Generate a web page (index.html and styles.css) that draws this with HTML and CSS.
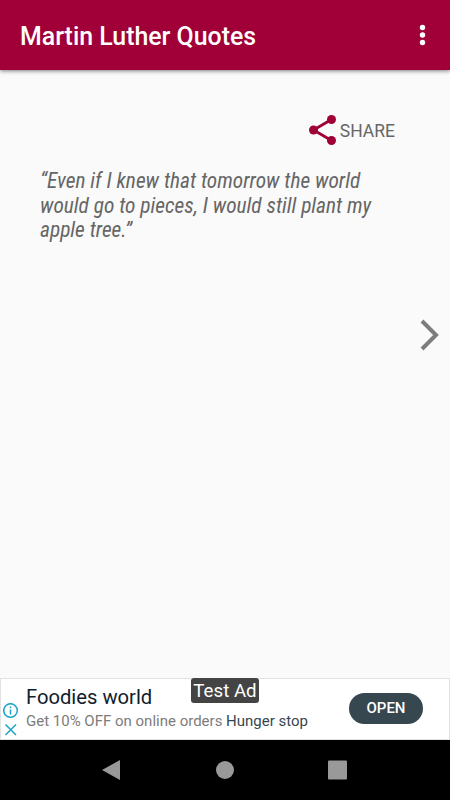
FILE: index.html
```html
<!DOCTYPE html>
<html lang="en">
<head>
<meta charset="utf-8">
<title>Martin Luther Quotes</title>
<link rel="stylesheet" href="styles.css">
</head>
<body>
<header class="appbar">
  <h1 class="title">Martin Luther Quotes</h1>
  <svg class="more" width="8" height="24" viewBox="0 0 8 24"><circle cx="4.500" cy="4.500" r="2.700"/><circle cx="4.500" cy="12" r="2.700"/><circle cx="4.500" cy="19.500" r="2.700"/></svg>
</header>
<main class="content">
  <div class="share">
    <svg width="28" height="30" viewBox="0 0 28 30"><path d="M23.500 4.500L5.500 15L23.500 25.500" fill="none" stroke="#a00037" stroke-width="2.800"/><circle cx="23.500" cy="4.500" r="4.500"/><circle cx="5.500" cy="15" r="4.500"/><circle cx="23.500" cy="25.500" r="4.500"/></svg>
    <span class="label">SHARE</span>
  </div>
  <p class="quote"><span>“Even if I knew that tomorrow the world</span><span>would go to pieces, I would still plant my</span><span>apple tree.”</span></p>
  <svg class="next" width="20" height="32" viewBox="0 0 20 32"><path d="M2 2L16 16L2 30"/></svg>
</main>
<aside class="ad">
  <div class="marks">
    <svg width="16" height="16" viewBox="0 0 16 16"><circle cx="7.500" cy="7.500" r="6.800"/><path d="M7.500 6.500v5M7.500 3.500v1.700"/></svg>
    <svg width="16" height="16" viewBox="0 0 16 16"><path d="M2.500 2.500l10.500 10.500M13 2.500l-10.500 10.500"/></svg>
  </div>
  <div class="copy">
    <div class="name">Foodies world</div>
    <div class="desc">Get 10% OFF on online orders <b>Hunger stop</b></div>
  </div>
  <div class="open">OPEN</div>
  <div class="test">Test Ad</div>
</aside>
<nav class="nav">
  <svg width="450" height="60" viewBox="0 0 450 60"><path d="M102 30L120 20v20z"/><circle cx="225" cy="30" r="9"/><rect x="328" y="20.500" width="19" height="19" rx="1"/></svg>
</nav>
</body>
</html>
```

FILE: styles.css
```css
* { box-sizing: border-box; }
body { margin: 0; width: 450px; height: 800px; display: flex; flex-direction: column; overflow: hidden; background: #fafafa; font-family: Roboto, sans-serif; }
svg { display: block; flex: none; }
.appbar { height: 70px; flex: none; display: flex; align-items: center; justify-content: space-between; padding: 0 24px 0 20px; background: #a00037; color: #fff; box-shadow: 0 1px 4px rgba(0,0,0,.5); }
.title { margin: 3px 0 0; font-size: 24.900px; line-height: 30px; font-weight: 500; }
.more { fill: #fff; }
.content { flex: 1; display: flex; flex-direction: column; padding: 45px 10px 0 40px; }
.share { height: 30px; display: flex; align-items: center; align-self: flex-end; gap: 4px; margin-right: 45px; color: #666; font-size: 17.500px; fill: #a00037; }
.label { padding-top: 1px; }
.quote { margin: 24px 0 0; display: flex; flex-direction: column; color: #666; font-family: "Roboto Condensed", Roboto, sans-serif; font-stretch: condensed; font-style: italic; font-size: 21.350px; line-height: 24.600px; white-space: nowrap; }
.next { align-self: flex-end; margin-top: 76px; fill: none; stroke: #7d7d7d; stroke-width: 4; }
.ad { position: relative; height: 62px; flex: none; display: flex; background: #fff; border: 1px solid #e2e2e2; }
.marks { width: 25px; padding: 24px 0 0 2px; display: flex; flex-direction: column; gap: 3px; fill: none; stroke: #18a5c8; stroke-width: 1.500; }
.copy { flex: 1; white-space: nowrap; }
.name { margin-top: 5px; font-size: 20.200px; line-height: 27px; color: #10202c; }
.desc { font-size: 15px; line-height: 21px; color: #7c7c7c; }
.desc b { font-weight: 400; color: #37474f; }
.open { width: 74px; height: 31px; margin: 14px 26px 0 0; border-radius: 16px; background: #37474f; color: #fff; font-size: 15px; font-weight: 500; line-height: 31px; text-align: center; }
.test { position: absolute; left: 190px; top: -1px; width: 68px; height: 25px; border-radius: 3px; background: #444; color: #fff; font-size: 18.700px; line-height: 27px; text-align: center; }
.nav { height: 60px; flex: none; background: #000; fill: #999; }
```
